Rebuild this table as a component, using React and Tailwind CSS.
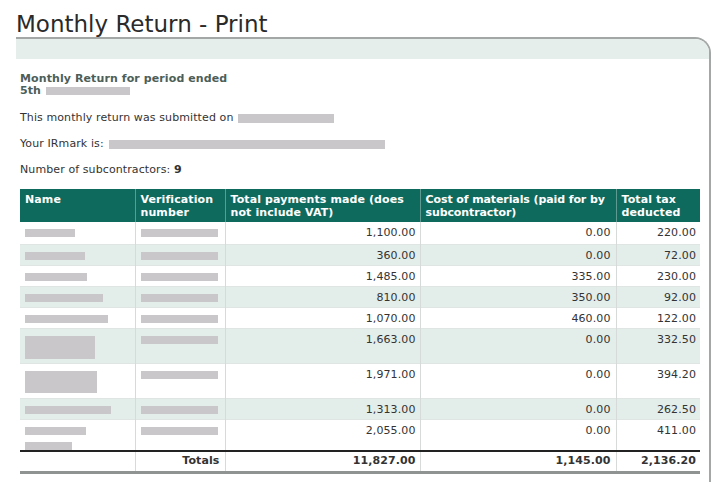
import React from "react";

const rows = [
  { n: [50], v: 77, p: "1,100.00", c: "0.00", t: "220.00", h: "h-[22px]", s: false },
  { n: [60], v: 77, p: "360.00", c: "0.00", t: "72.00", h: "h-[21px]", s: true },
  { n: [62], v: 77, p: "1,485.00", c: "335.00", t: "230.00", h: "h-[21px]", s: false },
  { n: [78], v: 77, p: "810.00", c: "350.00", t: "92.00", h: "h-[21px]", s: true },
  { n: [83], v: 77, p: "1,070.00", c: "460.00", t: "122.00", h: "h-[21px]", s: false },
  { n: [70], tall: 23, v: 77, p: "1,663.00", c: "0.00", t: "332.50", h: "h-[35px]", s: true },
  { n: [72], tall: 22, v: 77, p: "1,971.00", c: "0.00", t: "394.20", h: "h-[35px]", s: false },
  { n: [86], v: 77, p: "1,313.00", c: "0.00", t: "262.50", h: "h-[21px]", s: true },
  { n: [61, 47], v: 77, p: "2,055.00", c: "0.00", t: "411.00", h: "h-[32px]", s: false },
];

const font = { fontFamily: '"DejaVu Sans", Verdana, sans-serif' };

function Box({ w, h = 8 }) {
  return <div className="bg-[#c9c7c9]" style={{ width: w, height: h }} />;
}

export default function App() {
  return (
    <div className="w-[720px] h-[482px] bg-white overflow-hidden text-[#333]" style={font}>
      <div className="pl-4 pt-[12px] h-[37px] text-[23px] leading-[24px] text-[#2a2a2a]">
        Monthly Return - Print
      </div>
      <div className="ml-4 mr-[9px] h-[445px] border-t-2 border-r-2 border-[#a3a8a6] rounded-tr-[16px]">
        <div className="h-[20px] bg-[#e6eeeb] rounded-tr-[14px]" />
        <div className="pl-[4px] pr-[8px] text-[11px] leading-[12px] tracking-[0.1px]">
          <div className="pt-[14px] font-bold text-[#4d5e58]">
            <div>Monthly Return for period ended</div>
            <div className="flex items-center gap-[5px]">
              <span>5th</span>
              <Box w={84} h={8} />
            </div>
          </div>
          <div className="mt-[15px] flex items-center gap-[5px]">
            <span>This monthly return was submitted on</span>
            <Box w={96} h={9} />
          </div>
          <div className="mt-[14px] flex items-center gap-[5px]">
            <span>Your IRmark is:</span>
            <Box w={276} h={9} />
          </div>
          <div className="mt-[14px]">
            Number of subcontractors: <b>9</b>
          </div>
          <table className="mt-[13px] w-[680px] border-collapse table-fixed">
            <colgroup>
              <col className="w-[115px]" />
              <col className="w-[90px]" />
              <col className="w-[195px]" />
              <col className="w-[196px]" />
              <col className="w-[84px]" />
            </colgroup>
            <thead>
              <tr className="h-[33px] bg-[#0f6a5e] text-white font-bold align-top text-left leading-[13px] whitespace-nowrap">
                <th className="px-[5px] pt-[4px] border-r border-[#5e9a92]">Name</th>
                <th className="px-[5px] pt-[4px] border-r border-[#5e9a92]">Verification<br />number</th>
                <th className="px-[5px] pt-[4px] border-r border-[#5e9a92]">Total payments made (does<br />not include VAT)</th>
                <th className="px-[5px] pt-[4px] border-r border-[#5e9a92] tracking-[-0.1px]">Cost of materials (paid for by<br />subcontractor)</th>
                <th className="px-[5px] pt-[4px]">Total tax<br />deducted</th>
              </tr>
            </thead>
            <tbody>
              {rows.map((r, i) => (
                <tr key={i} className={`${r.h} align-top ${r.s ? "bg-[#e3edea]" : "bg-white"} border-b border-[#dfe5e3]`}>
                  <td className="pl-[5px] pt-[7px] border-r border-[#d6dad9]">
                    {r.tall ? (
                      <Box w={r.n[0]} h={r.tall} />
                    ) : (
                      <div className="flex flex-col gap-[7px]">
                        {r.n.map((w, k) => (
                          <Box key={k} w={w} h={8} />
                        ))}
                      </div>
                    )}
                  </td>
                  <td className="pl-[5px] pt-[7px] border-r border-[#d6dad9]">
                    <Box w={r.v} h={8} />
                  </td>
                  <td className="pr-[4px] pt-[5px] text-right border-r border-[#d6dad9]">{r.p}</td>
                  <td className="pr-[5px] pt-[5px] text-right border-r border-[#d6dad9]">{r.c}</td>
                  <td className="pr-[4px] pt-[5px] text-right">{r.t}</td>
                </tr>
              ))}
              <tr className="h-[21px] font-bold border-t-2 border-t-[#222] border-b-[3px] border-b-[#8f9392]">
                <td className="border-r border-[#d6dad9]" />
                <td className="pr-[5px] text-right border-r border-[#d6dad9]">Totals</td>
                <td className="pr-[4px] text-right border-r border-[#d6dad9]">11,827.00</td>
                <td className="pr-[5px] text-right border-r border-[#d6dad9]">1,145.00</td>
                <td className="pr-[4px] text-right">2,136.20</td>
              </tr>
            </tbody>
          </table>
        </div>
      </div>
    </div>
  );
}
